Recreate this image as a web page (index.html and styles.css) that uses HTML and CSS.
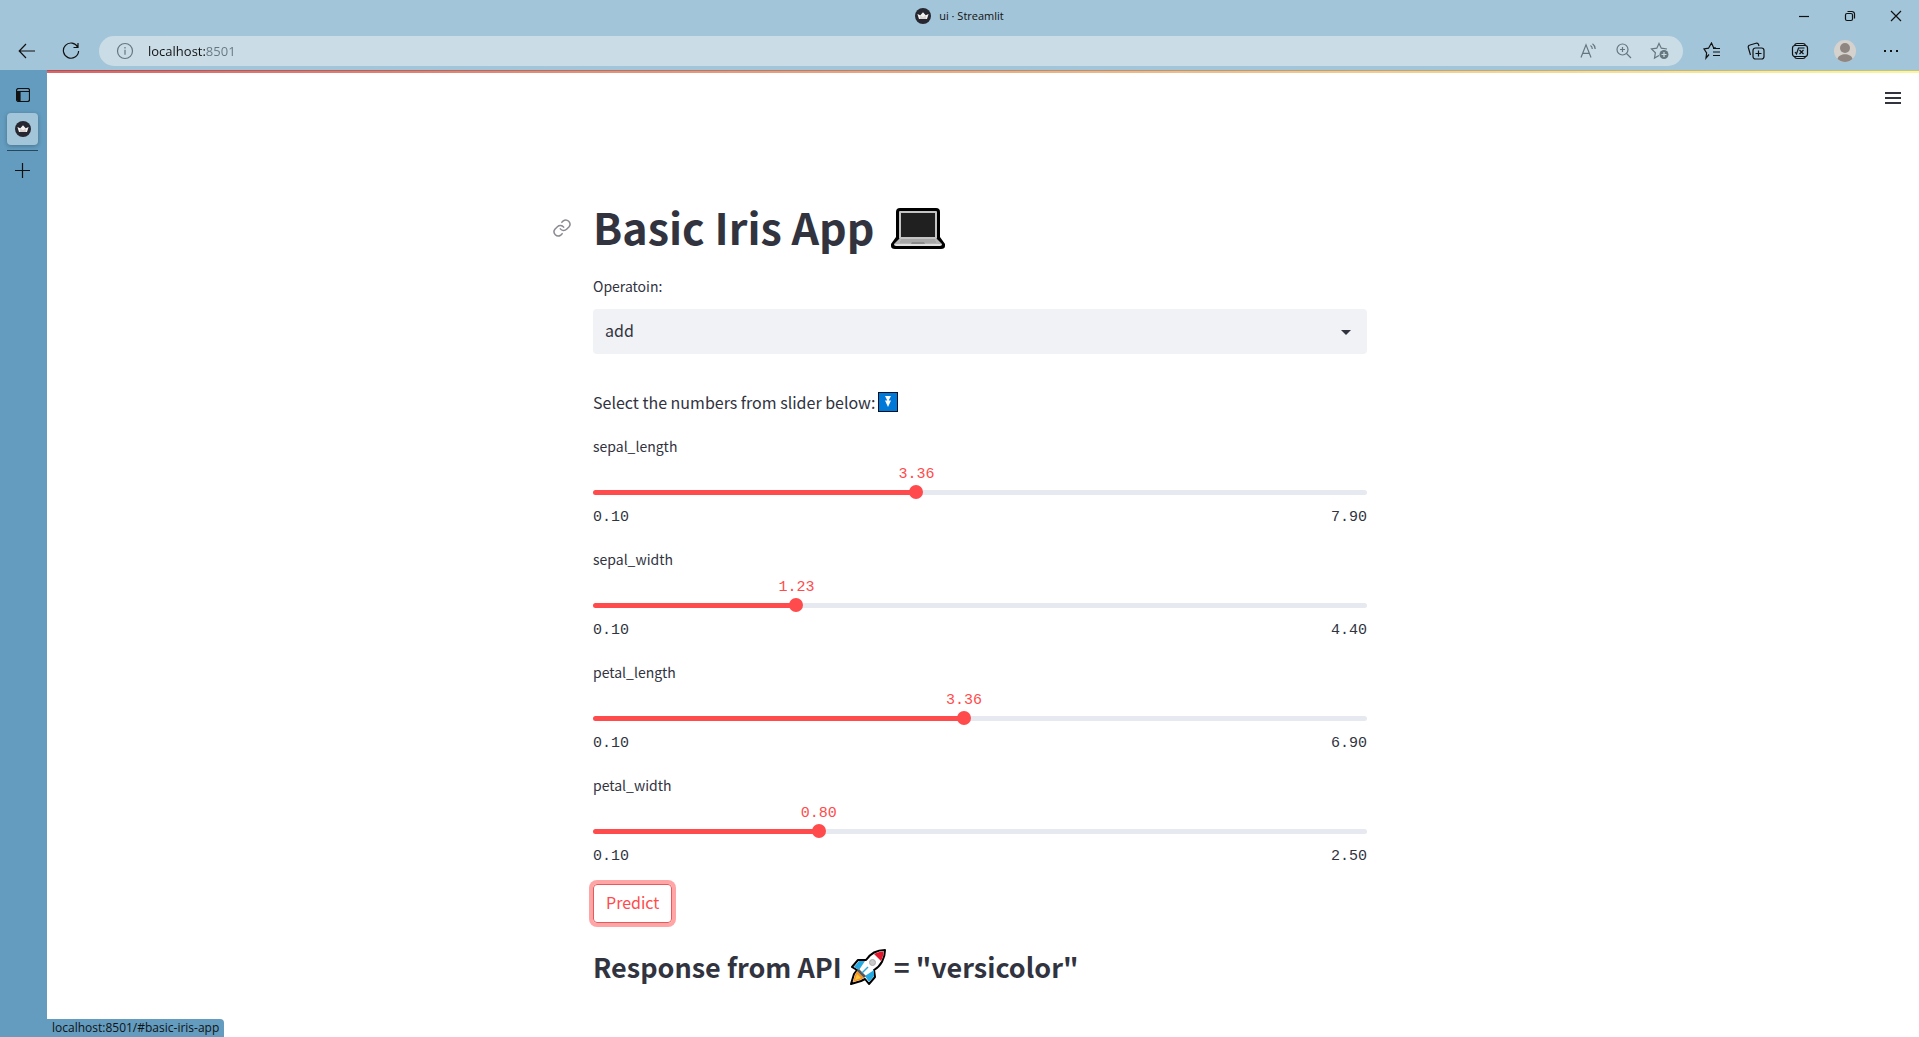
FILE: index.html
```html
<!DOCTYPE html>
<html lang="en">
<head>
<meta charset="utf-8">
<meta name="viewport" content="width=device-width, initial-scale=1">
<title>ui · Streamlit</title>
<link rel="stylesheet" href="styles.css">
</head>
<body>
<svg class="defs" aria-hidden="true">
  <symbol id="crown" viewBox="0 0 16 16">
    <circle cx="8" cy="8" r="8" fill="#262730"/>
    <path d="M2.4 5.9 5.3 7.2 8 4.2 10.7 7.2 13.6 5.9 12 11H4Z" fill="#f3f1f0"/>
    <path d="m5.3 7.2 2.7 2 2.7-2 .3 3.8H5Z" fill="#d8d3d2"/>
  </symbol>
</svg>

<header class="chrome">
  <div class="titlebar">
    <div class="page-title"><svg width="16" height="16"><use href="#crown"/></svg><span>ui · Streamlit</span></div>
    <div class="window-buttons">
      <button aria-label="Minimize"><svg width="12" height="12"><path d="M1 6.5h10"/></svg></button>
      <button aria-label="Restore"><svg width="12" height="12"><rect x="1.5" y="3.5" width="7" height="7" rx="1.5"/><path d="M3.5 1.5h4.5a2.5 2.5 0 0 1 2.5 2.5v4.5"/></svg></button>
      <button aria-label="Close"><svg width="12" height="12"><path d="m1 1 10 10M11 1 1 11"/></svg></button>
    </div>
  </div>
  <div class="toolbar">
    <button class="tool" aria-label="Back"><svg width="18" height="18"><path d="M17 9H1.5M8 2 1.2 9 8 16"/></svg></button>
    <button class="tool" aria-label="Refresh"><svg width="18" height="18"><path d="M15.8 5.2A7.6 7.6 0 1 0 16.6 9M16 1v4.5h-4.5"/></svg></button>
    <div class="address">
      <svg class="muted" width="18" height="18"><circle cx="9" cy="9" r="7.5"/><path d="M9 7.8v5M9 5v1.4"/></svg>
      <input type="text" aria-label="Address" value="localhost:8501" spellcheck="false">
      <button aria-label="Read aloud"><svg class="muted" width="18" height="18"><path d="m2 15.500 5-12.700 5 12.700M3.700 11.300h6.600M11.500 3.500c1.300.9 1.800 2 1.800 3.400M13.500 1.700c1.900 1.400 2.700 3 2.700 5.200"/></svg></button>
      <button aria-label="Zoom"><svg class="muted" width="18" height="18"><circle cx="7.500" cy="7.500" r="5.500"/><path d="M11.500 11.500 16 16M5 7.500h5M7.500 5v5"/></svg></button>
      <button aria-label="Add to favorites"><svg class="muted" width="20" height="18" viewBox="0 0 20 18"><path d="M9 13.500 4.500 16l.9-5.300L1.500 7l5.300-.8L9 1.500l2.300 4.700L17 7"/><circle cx="14" cy="12.500" r="4.500" fill="#66767f" stroke="none"/><path d="M14 10v5M11.500 12.500h5" stroke="#cadde7"/></svg></button>
    </div>
    <button class="tool" aria-label="Favorites"><svg width="18" height="18"><path d="M6 12.500 3 16l.6-5L1 7l4.500-.8L8.500 1l2 4.500 2.500.5M10 6.500h7M10 10h7M10 13.500h7"/></svg></button>
    <button class="tool" aria-label="Collections"><svg width="18" height="18"><rect x="6" y="6" width="11" height="11" rx="2.500"/><path d="M11.500 8.500v6M8.500 11.500h6M3.500 13 1.300 5.500A2 2 0 0 1 3 3l6-1.800a2 2 0 0 1 2.500 1.300L12 4"/></svg></button>
    <button class="tool" aria-label="Math solver"><svg width="18" height="18"><rect x="1.500" y="3.500" width="15" height="11" rx="2.500"/><path d="M3.500 3.500Q4 1.500 6 1.500h6q2 0 2.500 2M3.500 14.500q.5 2 2.500 2h6q2 0 2.500-2M4 10l1.500 2 2-6h6M8.500 8l4 4M12.500 8l-4 4"/></svg></button>
    <button class="tool wide" aria-label="Profile"><svg width="22" height="22"><circle cx="11" cy="11" r="11" fill="#d5d1cd" stroke="none"/><circle cx="11" cy="8" r="5" fill="#8f8681" stroke="none"/><path d="M3.500 19C5 12.800 17 12.800 18.500 19 14 23 8 23 3.500 19Z" fill="#8f8681" stroke="none"/></svg></button>
    <button class="tool wide" aria-label="Settings and more"><svg width="18" height="18"><path d="M2 9h2M8 9h2M14 9h2" stroke-width="2"/></svg></button>
  </div>
</header>

<div class="workspace">
  <nav class="tabs" aria-label="Tabs">
    <button aria-label="Tab actions"><svg width="14" height="14"><rect x=".5" y=".5" width="13" height="13" rx="2"/><path d="M4 4v9.500M.5 3.500h13"/><path d="M1 3h3v10.500H2L1 12Z" fill="#111" stroke="none"/></svg></button>
    <button class="current" aria-label="ui · Streamlit"><svg width="16" height="16"><use href="#crown"/></svg></button>
    <hr>
    <button aria-label="New tab"><svg width="15" height="15"><path d="M7.500 0v15M0 7.500h15"/></svg></button>
  </nav>

  <main class="app">
    <div class="decoration"></div>
    <div class="app-header">
      <button aria-label="Main menu"><svg width="18" height="14"><path d="M1 2h16M1 7h16M1 12h16"/></svg></button>
    </div>
    <div class="scroller">
    <div class="block">
      <h1 id="basic-iris-app">
        <a class="anchor" href="#basic-iris-app" aria-label="Link to heading"><svg width="20" height="20" viewBox="0 0 24 24"><path d="M10 13a5 5 0 0 0 7.500.5l3-3a5 5 0 0 0-7-7L11.800 5.200M14 11a5 5 0 0 0-7.500-.5l-3 3a5 5 0 0 0 7 7l1.700-1.700"/></svg></a>
        <span>Basic Iris App</span>
        <svg width="54" height="48" viewBox="0 -6 54 48" role="img" aria-label="laptop">
          <path d="M9 0h36q4 0 4 4v25l5 7v2q0 3-4 3H4q-4 0-4-3v-2l5-7V4q0-4 4-4Z" fill="#000"/>
          <rect x="8" y="3" width="38" height="28" rx="1" fill="#c4c4c4"/>
          <rect x="10" y="5" width="34" height="24" fill="#202020"/>
          <path d="M8 31h38l5 5H3Z" fill="#b4b4b4"/><path d="M3 36h48q0 2-2 2H5q-2 0-2-2Z" fill="#e0e0e0"/>
          <path d="M10 32h34M9 34h36" stroke="#999"/><path d="M21 34h12l1 2H20Z" fill="#8b8b8b"/>
        </svg>
      </h1>

      <label class="caption" for="operation">Operatoin:</label>
      <div class="select">
        <select id="operation"><option>add</option></select>
        <svg width="10" height="8" viewBox="0 -2 10 8" aria-hidden="true"><path d="M0 0h10L5 5Z"/></svg>
      </div>

      <p>Select the numbers from slider below:
        <svg width="20" height="20" role="img" aria-label="fast down"><rect x=".5" y=".5" width="19" height="19" fill="#0078d7" stroke="#06121f"/><path d="M7 4h6l-2.300 4.500H13L10 15 7 8.500h2.300Z" fill="#fff"/></svg>
      </p>

      <div class="slider" style="--at: 41.79%">
        <label class="caption" for="sepal_length">sepal_length</label>
        <div class="track"><output for="sepal_length">3.36</output><input type="range" id="sepal_length" min="0.1" max="7.9" step="0.01" value="3.36"></div>
        <div class="limits"><span>0.10</span><span>7.90</span></div>
      </div>
      <div class="slider" style="--at: 26.28%">
        <label class="caption" for="sepal_width">sepal_width</label>
        <div class="track"><output for="sepal_width">1.23</output><input type="range" id="sepal_width" min="0.1" max="4.4" step="0.01" value="1.23"></div>
        <div class="limits"><span>0.10</span><span>4.40</span></div>
      </div>
      <div class="slider" style="--at: 47.94%">
        <label class="caption" for="petal_length">petal_length</label>
        <div class="track"><output for="petal_length">3.36</output><input type="range" id="petal_length" min="0.1" max="6.9" step="0.01" value="3.36"></div>
        <div class="limits"><span>0.10</span><span>6.90</span></div>
      </div>
      <div class="slider" style="--at: 29.17%">
        <label class="caption" for="petal_width">petal_width</label>
        <div class="track"><output for="petal_width">0.80</output><input type="range" id="petal_width" min="0.1" max="2.5" step="0.01" value="0.8"></div>
        <div class="limits"><span>0.10</span><span>2.50</span></div>
      </div>

      <button class="predict">Predict</button>

      <h3>Response from API
        <svg width="36" height="36" viewBox="0 0 36 36" role="img" aria-label="rocket">
          <path d="M35 1C27 1 20 5 16 11L8 11 2 18l5 3-3 4-3 10 10-3 4-2 4 5 6-7-1-7C31 17 35 9 35 1Z" fill="#fff" stroke="#000" stroke-width="2" stroke-linejoin="round"/>
          <path d="M15 12H9l-5 6 5 3ZM24 21v6l-5 6-4-6Z" fill="#25a9e0"/>
          <path d="m7 22 7 7-4 2-7 2 2-7Z" fill="#f7931e"/><path d="m7 25 4 4-6 2Z" fill="#ffc83d"/>
          <path d="m9 20 7 7-2 2-7-7Z" fill="#555"/>
          <path d="M33.500 2.500C30 2.500 27 3.500 24 5l7 7c1.500-3 2.500-6 2.500-9.500Z" fill="#e2162d"/>
          <circle cx="22.500" cy="13.500" r="3" fill="#c9c9c9" stroke="#aaa"/><path d="m12 24 6-6" stroke="#25a9e0" stroke-width="1.500"/>
        </svg>
        = "versicolor"</h3>
    </div>
    </div>
    <div class="status">localhost:8501/#basic-iris-app</div>
  </main>
</div>
<script src="app.js"></script>
</body>
</html>
```
FILE: styles.css
```css
* { box-sizing: border-box; }

:root {
  --ui: "Open Sans", "Noto Sans", sans-serif;
  --text: "Noto Sans CJK SC", "Noto Sans", sans-serif;
  --mono: "Liberation Mono", monospace;
  --frame: #a3c5d9;
  --rail: #639cbf;
  --ink: #31333f;
  --red: #ff4b4b;
}

body {
  display: flex;
  flex-direction: column;
  min-height: 100vh;
  margin: 0;
  background: #fff;
  color: var(--ink);
  font: 16px/28px var(--text);
}

svg { display: block; flex: none; }
.defs { position: absolute; width: 0; height: 0; }

button {
  display: flex;
  align-items: center;
  justify-content: center;
  padding: 0;
  border: 0;
  background: none;
  color: inherit;
  font: inherit;
  cursor: pointer;
}

/* Browser frame */
.chrome {
  height: 70px;
  background: var(--frame);
  color: #111;
  font: 11px/18px var(--ui);
}

.chrome svg, .tabs svg { fill: none; stroke: #111; stroke-width: 1.2; }
.page-title svg, .tabs .current svg { stroke: none; }
.chrome svg.muted { stroke: #66767f; }

.titlebar {
  display: grid;
  grid-template-columns: 1fr auto 1fr;
  align-items: center;
  height: 32px;
}

.page-title { display: flex; grid-column: 2; align-items: center; gap: 8px; }
.window-buttons { display: flex; justify-content: flex-end; }
.window-buttons button { width: 46px; height: 32px; }

.toolbar {
  display: flex;
  align-items: center;
  height: 38px;
  padding: 0 5px;
}

.tool { width: 44px; height: 30px; }
.tool.wide { width: 46px; }

.address {
  display: flex;
  flex: 1;
  align-items: center;
  height: 30px;
  margin: 0 7px 0 6px;
  padding: 0 5px 0 17px;
  border-radius: 15px;
  background: #cadde7;
}

.address input {
  flex: 1;
  min-width: 0;
  margin-left: 14px;
  padding: 0;
  border: 0;
  outline: 0;
  background: linear-gradient(90deg, #111 58px, #66767f 58px) text;
  color: #111;
  font: 13px/20px var(--ui);
  -webkit-text-fill-color: transparent;
}

.address button { width: 36px; height: 30px; }

/* Vertical tabs */
.workspace { display: flex; flex: 1; }

.tabs {
  display: flex;
  flex: none;
  flex-direction: column;
  width: 47px;
  padding: 12px 9px 0 7px;
  background: var(--rail);
}

.tabs button { height: 26px; }

.tabs .current {
  height: 32px;
  margin-top: 5px;
  border-radius: 4px;
  background: var(--frame);
  box-shadow: 0 1px 4px #0004;
}

.tabs hr {
  width: 100%;
  height: 1px;
  margin: 5px 0 6px;
  border: 0;
  background: #27485c;
}

/* App */
.app { position: relative; flex: 1; min-width: 0; }

.decoration {
  height: 3px;
  border-top: 1px solid #0003;
  background: linear-gradient(90deg, #d9666a, #f8f6a4) border-box;
}

.app-header {
  display: flex;
  justify-content: flex-end;
  height: 50px;
  padding-right: 17px;
}

.app-header svg { stroke: var(--ink); stroke-width: 2; }

.scroller { padding-right: 6px; }

.block {
  max-width: 774px;
  margin: 0 auto;
  padding: 74px 0 40px;
}

h1 {
  display: flex;
  position: relative;
  align-items: center;
  gap: 17px;
  margin: 0;
  font-size: 43px;
  line-height: 58px;
}

.anchor { position: absolute; right: 100%; margin-right: 21px; padding-top: 4px; }
.anchor svg { fill: none; stroke: #8a8b92; stroke-width: 1.8; stroke-linecap: round; }

.caption { display: block; width: fit-content; font-size: 14px; line-height: 24px; }
h1 + .caption { margin-top: 19px; }

.select { display: grid; align-items: center; margin-top: 11px; }
.select > * { grid-area: 1 / 1; }

.select select {
  width: 100%;
  height: 45px;
  padding: 0 12px 4px;
  border: 0;
  border-radius: 4px;
  appearance: none;
  background: #f0f2f6;
  color: inherit;
  font: inherit;
}

.select svg { justify-self: end; margin-right: 16px; fill: var(--ink); pointer-events: none; }

p { display: flex; align-items: center; gap: 3px; margin: 34px 0 18px; }

.slider + .slider { margin-top: 19px; }

.track {
  position: relative;
  height: 20px;
  margin: 24px 0 6px;
}

.track::before {
  content: "";
  position: absolute;
  inset: 8px 0 7px;
  border-radius: 4px;
  background: linear-gradient(90deg, var(--red) var(--at), #e6e9ef var(--at));
}

.track output {
  position: absolute;
  bottom: 100%;
  left: var(--at);
  color: var(--red);
  font: 15px/14px var(--mono);
  transform: translateX(-50%);
}

.track input {
  position: relative;
  display: block;
  width: calc(100% + 14px);
  height: 20px;
  margin: 0 -7px;
  appearance: none;
  background: none;
}

.track input::-webkit-slider-thumb {
  width: 14px;
  height: 14px;
  border-radius: 50%;
  appearance: none;
  background: var(--red);
}

.limits { display: flex; justify-content: space-between; font: 15px/20px var(--mono); }

.predict {
  height: 39px;
  margin-top: 17px;
  padding: 0 12px 4px;
  border: 1px solid #e8595b;
  border-radius: 4px;
  box-shadow: 0 0 0 4px #ff4b4b80;
  color: var(--red);
}

h3 {
  display: flex;
  align-items: center;
  gap: 8px;
  margin: 25px 0 0;
  font-size: 27px;
  font-weight: 600;
  line-height: 37px;
}

.status {
  position: absolute;
  bottom: 0;
  left: 0;
  padding: 0 5px;
  border-top-right-radius: 4px;
  background: var(--rail);
  color: #111;
  font: 12px/18px var(--ui);
}
```
FILE: app.js
```js
document.querySelectorAll('.slider').forEach((slider) => {
  const input = slider.querySelector('input');
  input.addEventListener('input', () => {
    const { min, max, value } = input;
    slider.style.setProperty('--at', `${((value - min) / (max - min)) * 100}%`);
    slider.querySelector('output').textContent = Number(value).toFixed(2);
  });
});
```
